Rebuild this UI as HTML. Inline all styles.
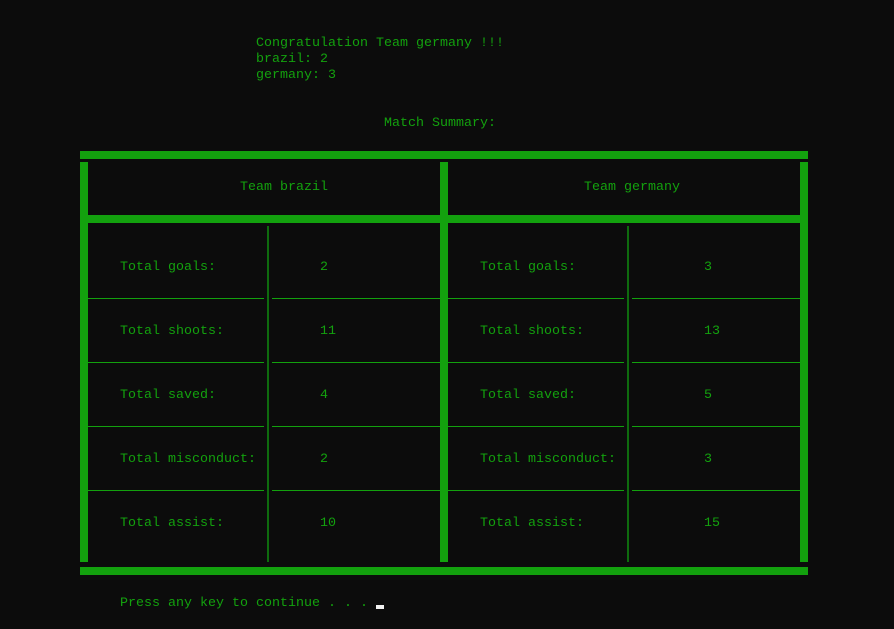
<!DOCTYPE html>
<html><head><meta charset="utf-8"><style>
html,body{margin:0;padding:0;background:#0c0c0c;width:894px;height:629px;overflow:hidden}
body{position:relative;font-family:"Liberation Mono",monospace;font-size:13.33px;color:#13a10e}
.t{position:absolute;line-height:16px;white-space:pre;margin-top:2px}
.b{position:absolute;background:#13a10e}
.d{position:absolute;background:#0e6b0e}
</style></head><body>
<div class="t" style="left:256px;top:34px">Congratulation Team germany !!!</div>
<div class="t" style="left:256px;top:50px">brazil: 2</div>
<div class="t" style="left:256px;top:66px">germany: 3</div>
<div class="t" style="left:384px;top:114px">Match Summary:</div>

<div class="b" style="left:80px;top:151px;width:728px;height:8px"></div>
<div class="b" style="left:80px;top:162px;width:8px;height:400px"></div>
<div class="b" style="left:440px;top:162px;width:8px;height:400px"></div>
<div class="b" style="left:800px;top:162px;width:8px;height:400px"></div>
<div class="b" style="left:80px;top:215px;width:728px;height:8px"></div>
<div class="b" style="left:80px;top:567px;width:728px;height:8px"></div>
<div class="d" style="left:267px;top:226px;width:2px;height:336px"></div>
<div class="d" style="left:627px;top:226px;width:2px;height:336px"></div>

<div class="t" style="left:240px;top:178px">Team brazil</div>
<div class="t" style="left:584px;top:178px">Team germany</div>

<div class="b" style="left:88px;top:298px;width:176px;height:1px"></div>
<div class="b" style="left:272px;top:298px;width:168px;height:1px"></div>
<div class="b" style="left:448px;top:298px;width:176px;height:1px"></div>
<div class="b" style="left:632px;top:298px;width:168px;height:1px"></div>
<div class="b" style="left:88px;top:362px;width:176px;height:1px"></div>
<div class="b" style="left:272px;top:362px;width:168px;height:1px"></div>
<div class="b" style="left:448px;top:362px;width:176px;height:1px"></div>
<div class="b" style="left:632px;top:362px;width:168px;height:1px"></div>
<div class="b" style="left:88px;top:426px;width:176px;height:1px"></div>
<div class="b" style="left:272px;top:426px;width:168px;height:1px"></div>
<div class="b" style="left:448px;top:426px;width:176px;height:1px"></div>
<div class="b" style="left:632px;top:426px;width:168px;height:1px"></div>
<div class="b" style="left:88px;top:490px;width:176px;height:1px"></div>
<div class="b" style="left:272px;top:490px;width:168px;height:1px"></div>
<div class="b" style="left:448px;top:490px;width:176px;height:1px"></div>
<div class="b" style="left:632px;top:490px;width:168px;height:1px"></div>

<div class="t" style="left:120px;top:258px">Total goals:</div>
<div class="t" style="left:320px;top:258px">2</div>
<div class="t" style="left:480px;top:258px">Total goals:</div>
<div class="t" style="left:704px;top:258px">3</div>

<div class="t" style="left:120px;top:322px">Total shoots:</div>
<div class="t" style="left:320px;top:322px">11</div>
<div class="t" style="left:480px;top:322px">Total shoots:</div>
<div class="t" style="left:704px;top:322px">13</div>

<div class="t" style="left:120px;top:386px">Total saved:</div>
<div class="t" style="left:320px;top:386px">4</div>
<div class="t" style="left:480px;top:386px">Total saved:</div>
<div class="t" style="left:704px;top:386px">5</div>

<div class="t" style="left:120px;top:450px">Total misconduct:</div>
<div class="t" style="left:320px;top:450px">2</div>
<div class="t" style="left:480px;top:450px">Total misconduct:</div>
<div class="t" style="left:704px;top:450px">3</div>

<div class="t" style="left:120px;top:514px">Total assist:</div>
<div class="t" style="left:320px;top:514px">10</div>
<div class="t" style="left:480px;top:514px">Total assist:</div>
<div class="t" style="left:704px;top:514px">15</div>

<div class="t" style="left:120px;top:594px">Press any key to continue . . .</div>
<div style="position:absolute;left:376px;top:605px;width:8px;height:4px;background:#f2f2f2"></div>
</body></html>
